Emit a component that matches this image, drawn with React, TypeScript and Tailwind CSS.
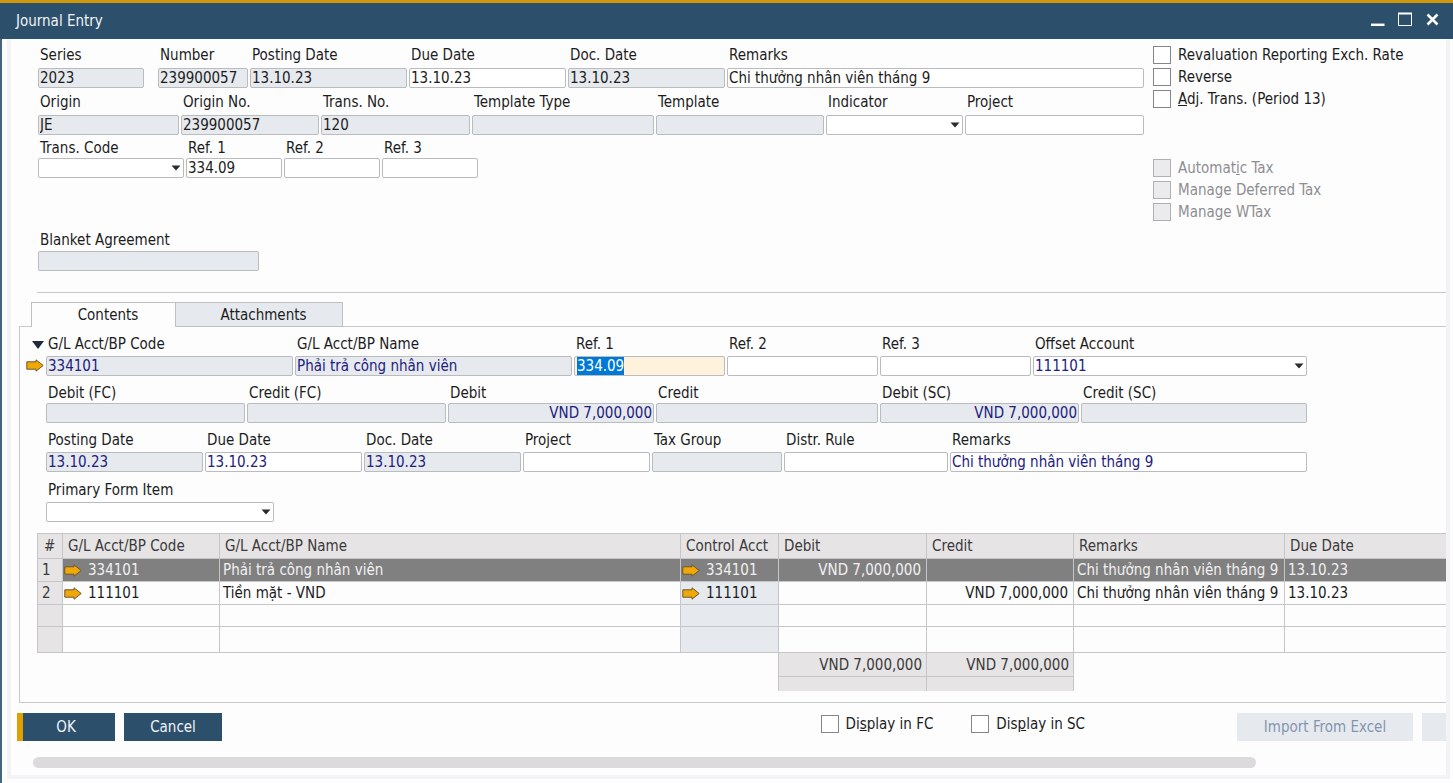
import {useEffect, useRef} from 'react';

const checks = [
    {id: 'reval', before: 'Revaluation Reporting Exch. Rate', disabled: false},
    {id: 'reverse', before: 'Reverse', disabled: false},
    {id: 'adj', before: '', key: 'A', after: 'dj. Trans. (Period 13)', disabled: false},
];

const taxChecks = [
    {id: 'autotax', before: 'Automat', key: 'i', after: 'c Tax', disabled: true},
    {id: 'deferred', before: 'Manage Deferred Tax', disabled: true},
    {id: 'wtax', before: 'Manage WTax', disabled: true},
];

const lines = [
    {no: '1', code: '334101', name: 'Phải trả công nhân viên', debit: 'VND 7,000,000', credit: '', remarks: 'Chi thưởng nhân viên tháng 9', due: '13.10.23', height: 'h-[23px]'},
    {no: '2', code: '111101', name: 'Tiền mặt - VND', debit: '', credit: 'VND 7,000,000', remarks: 'Chi thưởng nhân viên tháng 9', due: '13.10.23', height: 'h-[23px]'},
    {no: '', code: '', name: '', debit: '', credit: '', remarks: '', due: '', height: 'h-[22px]'},
    {no: '', code: '', name: '', debit: '', credit: '', remarks: '', due: '', height: 'h-[26px]'},
];

function classNames(...classes) {
    return classes.filter(Boolean).join(' ');
}

function LinkArrow() {
    return (
        <svg width={18} height={13} viewBox="0 0 18 13" className="block shrink-0" aria-hidden="true">
            <path d="M0.8 2.8H10V0.8L17.200 6.500 10 12.200V10.200H0.800z" fill="#f0a808" stroke="#6b5730" strokeWidth="1" />
        </svg>
    );
}

function Field({label, value = '', width, locked = false, right = false}) {
    return (
        <label className={classNames('flex min-w-0 flex-col justify-between', width)}>
            <span className="pl-[2px] whitespace-nowrap text-[#1c1c1c]">{label}</span>
            <input
                type="text"
                defaultValue={value}
                readOnly={locked}
                className={classNames(
                    'h-5 w-full rounded-xs border border-[#b9bbbe] px-px outline-none',
                    locked ? 'bg-[#e6eaee]' : 'bg-white',
                    right && 'text-right'
                )}
            />
        </label>
    );
}

function SelectField({label, value = '', width}) {
    return (
        <label className={classNames('flex min-w-0 flex-col justify-between', width)}>
            <span className="pl-[2px] whitespace-nowrap text-[#1c1c1c]">{label}</span>
            <span className="relative block">
                <select defaultValue={value} className="block h-5 w-full appearance-none rounded-xs border border-[#b9bbbe] bg-white px-px leading-[18px] outline-none">
                    <option value={value}>{value}</option>
                </select>
                <svg width={10} height={6} viewBox="0 0 10 6" className="pointer-events-none absolute top-[7px] right-[3px]" aria-hidden="true">
                    <path d="M0.5 0.5h9L5 5.5z" fill="#2b2b2b" />
                </svg>
            </span>
        </label>
    );
}

function Check({item}) {
    return (
        <label className={classNames('flex h-[22px] items-center gap-[7px] whitespace-nowrap', item.disabled ? 'text-[#8e8e90]' : 'text-[#1c1c1c]')}>
            <input
                type="checkbox"
                disabled={item.disabled}
                className={classNames('size-[18px] shrink-0 appearance-none border', item.disabled ? 'border-[#b0b0b2] bg-[#ebeaec]' : 'border-[#85858a] bg-white')}
            />
            <span>
                {item.before}
                {item.key && <u>{item.key}</u>}
                {item.after}
            </span>
        </label>
    );
}

function TitleBar() {
    return (
        <header className="flex h-[39px] items-center justify-between border-t-3 border-[#d0980b] bg-[#2c4f6c] pr-3 pl-4 text-[#f1f4f7]">
            <h1>Journal Entry</h1>
            <div className="flex gap-[10px]">
                <button type="button" aria-label="Minimize">
                    <svg width={18} height={18} viewBox="0 0 18 18" className="block">
                        <path d="M4 12.800h13.500" stroke="#fff" strokeWidth="2.500" />
                    </svg>
                </button>
                <button type="button" aria-label="Maximize">
                    <svg width={18} height={18} viewBox="0 0 18 18" className="block">
                        <path d="M3.500 1.500h13v12h-13z" fill="none" stroke="#fff" strokeWidth="1" />
                        <path d="M3 1.500h14" stroke="#fff" strokeWidth="2" />
                    </svg>
                </button>
                <button type="button" aria-label="Close">
                    <svg width={18} height={18} viewBox="0 0 18 18" className="block">
                        <path d="M4.500 2.500l10 10M14.500 2.500l-10 10" stroke="#fff" strokeWidth="2.600" />
                    </svg>
                </button>
            </div>
        </header>
    );
}

function EntryHeader() {
    return (
        <section className="flex pl-[27px]">
            <div className="min-w-0 flex-1 pt-[6px] text-[#1c1c1c]">
                <div className="flex h-[43px] gap-[2px]">
                    <Field label="Series" value="2023" width="w-[106px] mr-3" locked />
                    <Field label="Number" value="239900057" width="w-[90px]" locked />
                    <Field label="Posting Date" value="13.10.23" width="w-[157px]" locked />
                    <Field label="Due Date" value="13.10.23" width="w-[157px]" />
                    <Field label="Doc. Date" value="13.10.23" width="w-[157px]" locked />
                    <Field label="Remarks" value="Chi thưởng nhân viên tháng 9" width="flex-1" />
                </div>
                <div className="mt-1 flex h-[43px] gap-[2px]">
                    <Field label="Origin" value="JE" width="w-[141px]" locked />
                    <Field label="Origin No." value="239900057" width="w-[138px]" locked />
                    <Field label="Trans. No." value="120" width="w-[149px]" locked />
                    <Field label="Template Type" width="w-[182px]" locked />
                    <Field label="Template" width="w-[168px]" locked />
                    <SelectField label="Indicator" width="w-[137px]" />
                    <Field label="Project" width="flex-1" />
                </div>
                <div className="mt-[3px] flex h-10 gap-[2px]">
                    <SelectField label="Trans. Code" width="w-[146px]" />
                    <Field label="Ref. 1" value="334.09" width="w-24" />
                    <Field label="Ref. 2" width="w-24" />
                    <Field label="Ref. 3" width="w-24" />
                </div>
                <div className="mt-[52px] flex h-[41px]">
                    <Field label="Blanket Agreement" width="w-[221px]" locked />
                </div>
            </div>
            <div className="ml-[9px] w-[293px] shrink-0 pt-[5px]">
                {checks.map((item) => (
                    <Check key={item.id} item={item} />
                ))}
                <div className="mt-[47px]">
                    {taxChecks.map((item) => (
                        <Check key={item.id} item={item} />
                    ))}
                </div>
            </div>
        </section>
    );
}

function LineDetails() {
    const refInput = useRef<HTMLInputElement>(null);

    useEffect(() => {
        refInput.current?.focus();
        refInput.current?.select();
    }, []);

    return (
        <div className="flex">
            <div className="flex w-[26px] shrink-0 flex-col items-end pt-[7px] pr-[2px]">
                <button type="button" aria-label="Collapse">
                    <svg width={12} height={8} viewBox="0 0 12 8" className="block">
                        <path d="M0 0h12L6 8z" fill="#1f2a3d" />
                    </svg>
                </button>
                <button type="button" aria-label="Open account" className="mt-[10px]">
                    <LinkArrow />
                </button>
            </div>
            <div className="mr-[139px] min-w-0 flex-1 text-[#22207d]">
                <div className="flex h-[42px] gap-[2px]">
                    <Field label="G/L Acct/BP Code" value="334101" width="w-[247px]" locked />
                    <Field label="G/L Acct/BP Name" value="Phải trả công nhân viên" width="w-[277px]" locked />
                    <label className="flex w-[151px] flex-col justify-between">
                        <span className="pl-[2px] text-[#1c1c1c]">Ref. 1</span>
                        <input
                            ref={refInput}
                            type="text"
                            defaultValue="334.09"
                            className="h-5 w-full rounded-xs border border-[#b9bbbe] bg-[#fef2dc] px-[2px] outline-none selection:bg-[#0078d7] selection:text-white"
                        />
                    </label>
                    <Field label="Ref. 2" width="w-[151px]" />
                    <Field label="Ref. 3" width="w-[151px]" />
                    <SelectField label="Offset Account" value="111101" width="flex-1" />
                </div>
                <div className="mt-[7px] flex h-10 gap-[2px]">
                    <Field label="Debit (FC)" width="w-[199px]" locked />
                    <Field label="Credit (FC)" width="w-[199px]" locked />
                    <Field label="Debit" value="VND 7,000,000" width="w-[206px]" locked right />
                    <Field label="Credit" width="w-[222px]" locked />
                    <Field label="Debit (SC)" value="VND 7,000,000" width="w-[199px]" locked right />
                    <Field label="Credit (SC)" width="flex-1" locked />
                </div>
                <div className="mt-[7px] flex h-[42px] gap-[2px]">
                    <Field label="Posting Date" value="13.10.23" width="w-[157px]" locked />
                    <Field label="Due Date" value="13.10.23" width="w-[157px]" />
                    <Field label="Doc. Date" value="13.10.23" width="w-[157px]" locked />
                    <Field label="Project" width="w-[127px]" />
                    <Field label="Tax Group" width="w-[130px]" locked />
                    <Field label="Distr. Rule" width="w-[164px]" />
                    <Field label="Remarks" value="Chi thưởng nhân viên tháng 9" width="flex-1" />
                </div>
                <div className="mt-2 flex h-[42px]">
                    <SelectField label="Primary Form Item" width="w-[228px]" />
                </div>
            </div>
        </div>
    );
}

function LinesTable() {
    return (
        <table className="w-full table-fixed border-separate border-spacing-0 whitespace-nowrap [&_td]:border-r [&_td]:border-[#c6c6c9] [&_td:last-child]:border-r-0 [&_th]:border-r [&_th]:border-b [&_th]:border-[#c6c6c9] [&_th:last-child]:border-r-0">
            <colgroup>
                <col className="w-[26px]" />
                <col className="w-[157px]" />
                <col className="w-[461px]" />
                <col className="w-[98px]" />
                <col className="w-[148px]" />
                <col className="w-[147px]" />
                <col className="w-[211px]" />
                <col />
            </colgroup>
            <thead className="bg-[#e6e4e4] text-left text-[#3a3a3c]">
                <tr className="h-[26px]">
                    <th className="border-t border-l pl-[6px] font-normal">#</th>
                    <th className="border-t pl-[5px] font-normal">G/L Acct/BP Code</th>
                    <th className="border-t pl-[5px] font-normal">G/L Acct/BP Name</th>
                    <th className="border-t pl-[5px] font-normal">Control Acct</th>
                    <th className="border-t pl-[5px] font-normal">Debit</th>
                    <th className="border-t pl-[5px] font-normal">Credit</th>
                    <th className="border-t pl-[5px] font-normal">Remarks</th>
                    <th className="border-t pl-[5px] font-normal">Due Date</th>
                </tr>
            </thead>
            <tbody className="[&_td]:border-b">
                {lines.map((line, i) => (
                    <tr key={i} className={classNames(line.height, i === 0 ? 'bg-[#808080] text-[#f0f0f0]' : 'text-[#1c1c1c]')}>
                        <td className="border-l bg-[#e6e4e4] pl-1 text-[#3a3a3c]">{line.no}</td>
                        <td className="pl-px">
                            {line.code && (
                                <div className="flex items-center gap-[6px]">
                                    <LinkArrow />
                                    {line.code}
                                </div>
                            )}
                        </td>
                        <td className="pl-[3px]">{line.name}</td>
                        <td className={classNames('pl-px', i > 0 && 'bg-[#e6eaee]')}>
                            {line.code && (
                                <div className="flex items-center gap-[6px]">
                                    <LinkArrow />
                                    {line.code}
                                </div>
                            )}
                        </td>
                        <td className="pr-[5px] text-right">{line.debit}</td>
                        <td className="pr-[5px] text-right">{line.credit}</td>
                        <td className="overflow-hidden pl-[3px]">{line.remarks}</td>
                        <td className="pl-[3px]">{line.due}</td>
                    </tr>
                ))}
            </tbody>
            <tfoot className="text-right text-[#3a3a3c]">
                <tr className="h-[24px]">
                    <td colSpan={4} />
                    <td className="border-b bg-[#e6e4e4] pr-1">VND 7,000,000</td>
                    <td className="border-b bg-[#e6e4e4] pr-1">VND 7,000,000</td>
                    <td colSpan={2} />
                </tr>
                <tr className="h-[14px]">
                    <td colSpan={4} />
                    <td className="bg-[#e6e4e4]" />
                    <td className="bg-[#e6e4e4]" />
                    <td colSpan={2} />
                </tr>
            </tfoot>
        </table>
    );
}

function Footer() {
    return (
        <footer className="mt-[10px] flex h-7 pl-[6px]">
            <button type="button" className="w-[98px] border-l-6 border-[#e0a000] bg-[#2c4f6c] pr-[6px] text-[#f1f4f7]">
                OK
            </button>
            <button type="button" className="ml-[9px] w-[98px] bg-[#2c4f6c] text-[#f1f4f7]">
                Cancel
            </button>
            <div className="mr-[152px] ml-auto flex items-start gap-[38px]">
                <Check item={{before: 'Di', key: 's', after: 'play in FC'}} />
                <Check item={{before: 'Dis', key: 'p', after: 'lay in SC'}} />
            </div>
            <button type="button" disabled className="w-[176px] bg-[#e6eaee] text-[#8594ae]">
                Import From Excel
            </button>
            <button type="button" disabled aria-label="More" className="ml-[9px] w-6 bg-[#e6eaee]" />
        </footer>
    );
}

export default function App() {
    return (
        <div className="flex min-h-screen min-w-[1400px] flex-col bg-[#fdfdfe] font-['DejaVu_Sans_Condensed','Noto_Sans',sans-serif] text-[15px] leading-5">
            <TitleBar />
            <div className="flex flex-1 flex-col border-l-2 border-[#48637f] pr-[3px] pb-1 pl-[5px]">
                <main className="flex-1 border-x-4 border-b-4 border-[#f3f2f5]">
                    <EntryHeader />
                    <hr className="mt-[21px] ml-[26px] border-[#c9c9cc]" />

                    {/* Tabs sit over the panel's top border */}
                    <div role="tablist" className="relative mt-[9px] ml-5 flex h-[25px]">
                        <button type="button" role="tab" aria-selected="true" className="w-[144px] border-t border-l border-[#c0c0c3] bg-[#fdfdfe] pl-[9px] text-[#1c1c1c]">
                            Contents
                        </button>
                        <button type="button" role="tab" aria-selected="false" className="w-[168px] border border-[#c0c0c3] bg-[#e6eaee] pl-[9px] text-[#1c1c1c]">
                            Attachments
                        </button>
                    </div>
                    <section className="-mt-px ml-2 border-y border-l border-[#c9c9cc] pt-[7px] pb-[11px]">
                        <LineDetails />
                        <div className="mt-[11px] ml-[17px]">
                            <LinesTable />
                        </div>
                    </section>

                    <Footer />
                    <div className="mt-4 mr-[190px] ml-[22px] h-[11px] rounded-full bg-[#dcdadc]" />
                </main>
            </div>
        </div>
    );
}
